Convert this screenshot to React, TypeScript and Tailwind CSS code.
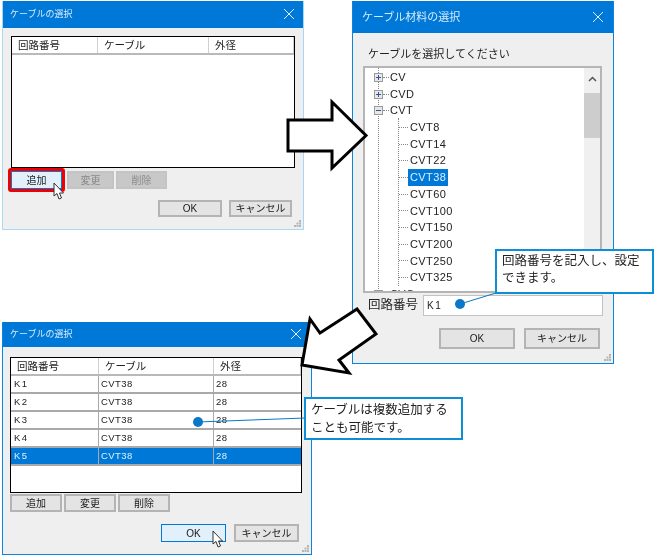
const font = '[font-family:"Liberation_Sans","Noto_Sans_CJK_JP",sans-serif]';

function CloseX({ className }: { className: string }) {
  return (
    <svg className={className} width="12" height="12" viewBox="0 0 12 12" fill="none" stroke="#e4f2fc" strokeWidth="1">
      <path d="M1 1 L11 11 M11 1 L1 11" />
    </svg>
  );
}

function Cursor({ className }: { className: string }) {
  return (
    <svg className={className} width="12" height="19" viewBox="0 0 12 19">
      <path d="M1 1 L1 14 L4 11.5 L6 17 L8.5 16 L6.5 11 L10.5 11 Z" fill="#fff" stroke="#333" strokeWidth="1" />
    </svg>
  );
}

function Grip({ className }: { className: string }) {
  return (
    <svg className={className} width="8" height="8" viewBox="0 0 8 8" fill="#b5b5b5">
      <rect x="5" y="0" width="2" height="2" />
      <rect x="2.500" y="2.500" width="2" height="2" />
      <rect x="5" y="2.500" width="2" height="2" />
      <rect x="0" y="5" width="2" height="2" />
      <rect x="2.500" y="5" width="2" height="2" />
      <rect x="5" y="5" width="2" height="2" />
    </svg>
  );
}

function Btn({ label, className, disabled, active }: { label: string; className: string; disabled?: boolean; active?: boolean }) {
  const tone = active
    ? "border border-[#0078d7] bg-[#e1f0fb] text-[#1a1a1a]"
    : disabled
      ? "border-2 border-[#c4c4c4] bg-[#c8c8c8] text-[#8a8a8a]"
      : "border-2 border-[#b4b4b4] bg-[#e4e4e4] text-[#1a1a1a]";
  return <div className={`flex items-center justify-center text-[10px] ${tone} ${className}`}>{label}</div>;
}

function Header({ widths }: { widths: string[] }) {
  const labels = ["回路番号", "ケーブル", "外径"];
  return (
    <div className="flex h-[18px] shrink-0 border-b-2 border-[#b9b9b9] bg-white">
      {labels.map((l, i) => (
        <div
          key={l}
          className={`flex items-center border-r border-[#d0d0d0] pl-[6px] pt-[2px] text-[10.5px] text-[#222] ${widths[i]}`}
        >
          {l}
        </div>
      ))}
    </div>
  );
}

const cableRows = ["K1", "K2", "K3", "K4", "K5"];
const treeKids = ["CVT8", "CVT14", "CVT22", "CVT38", "CVT60", "CVT100", "CVT150", "CVT200", "CVT250", "CVT325"];

function TreeTop({ label, open }: { label: string; open?: boolean }) {
  return (
    <div className="flex h-[16.7px] items-center pl-[9px]">
      <div className="relative flex h-[9px] w-[9px] shrink-0 items-center justify-center border border-[#9a9a9a] bg-[#e8e8e8]">
        <div className="h-px w-[5px] bg-[#34558f]" />
        {!open && <div className="absolute h-[5px] w-px bg-[#34558f]" />}
      </div>
      <div className="w-[6px] border-t border-dotted border-[#888]" />
      <span className="pl-px text-[11px] tracking-[0.4px] text-[#222]">{label}</span>
    </div>
  );
}

export default function App() {
  return (
    <div className={`relative h-[556px] w-[656px] overflow-hidden bg-white blur-[0.3px] ${font}`}>
      {/* first dialog */}
      <div className="absolute left-[2px] top-[1px] flex h-[229px] w-[302px] flex-col border-x border-b border-[#a9d8f3] bg-[#efefef]">
        <div className="relative flex h-[27px] shrink-0 items-center bg-[#0078d7] pl-[7px] text-[9px] text-[#d5ecfb]">
          ケーブルの選択
          <CloseX className="absolute right-[8px] top-[7px]" />
        </div>
        <div className="relative ml-[8px] mt-[8px] flex h-[132px] w-[284px] flex-col border border-black bg-white">
          <Header widths={["w-[86px]", "w-[111px]", "w-[85px]"]} />
        </div>
        <div className="relative ml-[8px] mt-[3px] flex h-[18px]">
          <Btn label="追加" className="w-[51px]" active />
          <Btn label="変更" className="ml-[5px] w-[47px]" disabled />
          <Btn label="削除" className="ml-[2px] w-[51px]" disabled />
          <div className="pointer-events-none absolute -left-[3px] -top-[3px] h-[24px] w-[57px] rounded-[3px] border-[3px] border-[#f00000]" />
          <Cursor className="absolute left-[42px] top-[11px]" />
        </div>
        <div className="ml-[155px] mt-[11px] flex gap-[7px]">
          <Btn label="OK" className="h-[17px] w-[64px]" />
          <Btn label="キャンセル" className="h-[17px] w-[63px]" />
        </div>
        <Grip className="absolute bottom-[1px] right-[1px]" />
      </div>

      {/* material dialog */}
      <div className="absolute left-[352px] top-[1px] flex h-[363px] w-[262px] flex-col border-x border-b border-[#0a84dc] bg-[#efefef]">
        <div className="relative flex h-[32px] shrink-0 items-center bg-[#0078d7] pl-[9px] text-[11px] text-[#d5ecfb]">
          ケーブル材料の選択
          <CloseX className="absolute right-[9px] top-[10px]" />
        </div>
        <div className="ml-[15px] mt-[13px] h-[20px] text-[11px] leading-[17px] text-[#222]">ケーブルを選択してください</div>
        <div className="relative ml-[10px] flex h-[227px] w-[239px] overflow-hidden border-2 border-[#b5b5b5] bg-white">
          <div className="relative h-full w-[219px] overflow-hidden pt-[1px]">
            <div className="absolute left-[13px] top-0 h-full border-l border-dotted border-[#888]" />
            <div className="absolute left-[33px] top-[50px] h-[168px] border-l border-dotted border-[#888]" />
            <div className="relative">
              <TreeTop label="CV" />
              <TreeTop label="CVD" />
              <TreeTop label="CVT" open />
              {treeKids.map((k) => (
                <div key={k} className="flex h-[16.7px] items-center pl-[34px]">
                  <div className="w-[9px] border-t border-dotted border-[#888]" />
                  <span
                    className={`px-[2px] text-[11px] leading-[16.7px] tracking-[0.4px] ${
                      k === "CVT38" ? "bg-[#0078d7] text-[#dff0fb]" : "text-[#222]"
                    }`}
                  >
                    {k}
                  </span>
                </div>
              ))}
              <TreeTop label="CVO" />
            </div>
          </div>
          <div className="flex w-[16px] flex-col items-center bg-[#f0f0f0]">
            <svg className="mt-[8px]" width="9" height="6" viewBox="0 0 9 6" fill="none" stroke="#555" strokeWidth="1.500">
              <path d="M1 5 L4.500 1.500 L8 5" />
            </svg>
            <div className="mt-[11px] h-[45px] w-full bg-[#cdcdcd]" />
          </div>
        </div>
        <div className="mt-[2px] flex h-[21px] items-center pl-[15px]">
          <span className="w-[55px] text-[12.5px] text-[#222]">回路番号</span>
          <div className="flex h-[21px] w-[180px] items-center border border-[#c2c2c2] bg-white pl-[3px] text-[10px] tracking-[1.500px] text-[#222]">
            K1
          </div>
        </div>
        <div className="ml-[86px] mt-[12px] flex gap-[9px]">
          <Btn label="OK" className="h-[21px] w-[76px]" />
          <Btn label="キャンセル" className="h-[21px] w-[76px]" />
        </div>
        <Grip className="absolute bottom-[1px] right-[1px]" />
      </div>

      {/* arrows and leader lines */}
      <svg className="absolute left-0 top-0" width="656" height="556" viewBox="0 0 656 556" fill="none">
        <path d="M288 120 L332 120 L332 102 L366 135.500 L332 168 L332 151 L288 151 Z" fill="#fff" stroke="#000" strokeWidth="3" />
        <circle cx="460" cy="304" r="5" fill="#0a78c8" />
        <path d="M460 304 L496 293" stroke="#0a78c8" strokeWidth="1" />
      </svg>

      {/* result dialog */}
      <div className="absolute left-[2px] top-[322px] flex h-[233px] w-[310px] flex-col border-x border-b border-[#0a84dc] bg-[#efefef]">
        <div className="relative flex h-[25px] shrink-0 items-center bg-[#0078d7] pl-[7px] text-[9px] text-[#d5ecfb]">
          ケーブルの選択
          <CloseX className="absolute right-[9px] top-[6px]" />
        </div>
        <div className="ml-[7px] mt-[10px] flex h-[136px] w-[292px] flex-col border border-black bg-white">
          <Header widths={["w-[88px]", "w-[115px]", "w-[87px]"]} />
          {cableRows.map((r) => {
            const sel = r === "K5";
            return (
              <div
                key={r}
                className={`flex h-[18px] shrink-0 border-b-2 border-[#a9a9a9] text-[9.500px] ${
                  sel ? "bg-[#0078d7] text-[#dff0fb]" : "bg-white text-[#222]"
                }`}
              >
                <div className="flex w-[88px] items-center border-r border-[#a9a9a9] pl-[3px] tracking-[1.500px]">{r}</div>
                <div className="flex w-[115px] items-center border-r border-[#a9a9a9] pl-[2px] tracking-[0.400px]">CVT38</div>
                <div className="flex w-[87px] items-center pl-[2px] tracking-[0.400px]">28</div>
              </div>
            );
          })}
        </div>
        <div className="ml-[7px] mt-[1px] flex gap-[2px]">
          <Btn label="追加" className="h-[18px] w-[52px]" />
          <Btn label="変更" className="h-[18px] w-[52px]" />
          <Btn label="削除" className="h-[18px] w-[52px]" />
        </div>
        <div className="relative ml-[158px] mt-[12px] flex gap-[8px]">
          <Btn label="OK" className="h-[18px] w-[65px]" active />
          <Btn label="キャンセル" className="h-[18px] w-[65px]" />
          <Cursor className="absolute left-[51px] top-[6px]" />
        </div>
        <Grip className="absolute bottom-[1px] right-[1px]" />
      </div>

      <svg className="absolute left-0 top-0" width="656" height="556" viewBox="0 0 656 556" fill="none">
        <path d="M310 319 L302 365 L349 373 L339 360 L376 334 L357 309 L320 333 Z" fill="#fff" stroke="#000" strokeWidth="3" />
        <circle cx="198" cy="422" r="5" fill="#0a78c8" />
        <path d="M198 422 L305 418" stroke="#0a78c8" strokeWidth="1" />
      </svg>

      {/* callouts */}
      <div className="absolute left-[495px] top-[249px] h-[45px] w-[159px] border-2 border-[#0d8fd6] bg-white pl-[5px] pt-[2px] text-[12.5px] leading-[17px] text-[#222]">
        回路番号を記入し、設定
        <br />
        できます。
      </div>
      <div className="absolute left-[304px] top-[397px] h-[43px] w-[159px] border-2 border-[#0d8fd6] bg-white pl-[5px] pt-[2px] text-[12.5px] leading-[18px] text-[#222]">
        ケーブルは複数追加する
        <br />
        ことも可能です。
      </div>
    </div>
  );
}
